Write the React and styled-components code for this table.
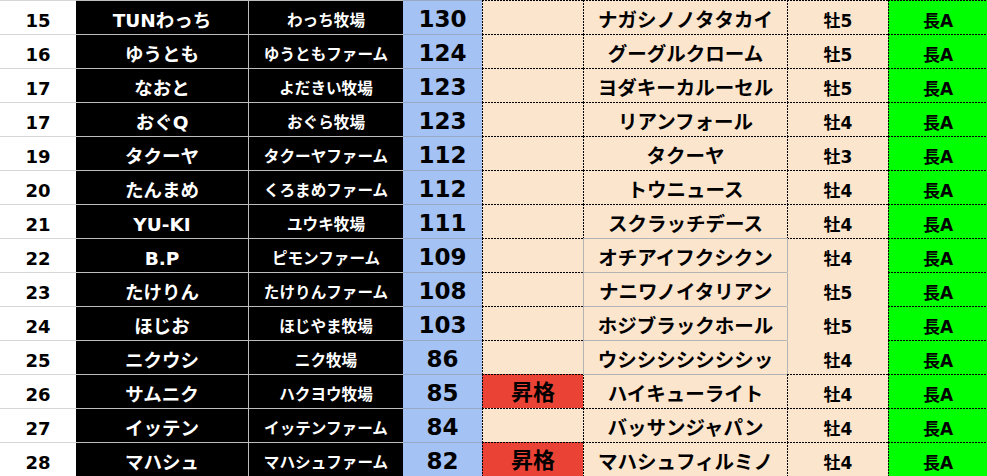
import React from "react";
import styled, { createGlobalStyle, css } from "styled-components";

const GlobalStyle = createGlobalStyle`
  html, body {
    margin: 0;
    padding: 0;
    background: #ffffff;
    overflow: hidden;
  }
  body {
    font-family: "DejaVu Sans", "Noto Sans CJK JP", sans-serif;
  }
`;

const COLS = "76px 172px 155px 79px 101px 204px 101px 99px";

const Sheet = styled.div`
  width: 987px;
  display: flex;
  flex-direction: column;
  font-family: "DejaVu Sans", "Noto Sans CJK JP", sans-serif;
  font-weight: 700;
`;

const Row = styled.div`
  display: grid;
  grid-template-columns: ${COLS};
  height: 34px;
`;

const Cell = styled.div`
  box-sizing: border-box;
  display: flex;
  justify-content: center;
  align-items: flex-end;
  padding-bottom: 4px;
  line-height: 1;
  white-space: nowrap;
  overflow: hidden;
  border-top: 1px solid transparent;
`;

const RankCell = styled(Cell)`
  background: #ffffff;
  color: #000000;
  border-top-color: #d6d6d6;
  font-size: 18px;
`;

const NameCell = styled(Cell)`
  background: #000000;
  color: #ffffff;
  border-top-color: #bdbdbd;
  font-size: 18.5px;
`;

const FarmCell = styled(Cell)`
  background: #000000;
  color: #ffffff;
  border-top-color: #bdbdbd;
  border-left: 1px solid #bdbdbd;
  font-size: 15.6px;
`;

const ScoreCell = styled(Cell)`
  background: #a4c2f4;
  color: #000000;
  border-top-color: #98a9c6;
  font-size: 23px;
  padding-bottom: 3px;
`;

const solidGray = "1px solid #b4b4b4";
const dashH = "repeating-linear-gradient(to right, #000 0 2px, transparent 2px 3px)";
const dashV = "repeating-linear-gradient(to bottom, #000 0 2px, transparent 2px 3px)";

/* spreadsheet dotted rule: 2px dash, 1px gap, drawn on the top and/or left edge */
const dashedEdges = ({ fill, top = true, left = true }) => css`
  background-color: ${fill};
  background-image: ${top ? dashH : "none"}, ${left ? dashV : "none"};
  background-size: 100% 1px, 1px 100%;
  background-position: left top, left top;
  background-repeat: no-repeat;
  background-origin: border-box;
  background-clip: border-box;
`;

const PeachCell = styled(Cell)`
  color: #000000;
  border-top: 1px solid transparent;
  border-left: 1px solid transparent;
`;

const PromoCell = styled(PeachCell)`
  ${(p) => dashedEdges({ fill: p.$promoted ? "#ea4335" : "#fce5cd" })}
  font-size: 22px;
`;

const HorseCell = styled(PeachCell)`
  ${(p) => dashedEdges({ fill: "#fce5cd", top: !p.$grayTop, left: !p.$grayLeft })}
  ${(p) => p.$grayTop && css`border-top: ${solidGray};`}
  ${(p) => p.$grayLeft && css`border-left: ${solidGray};`}
  font-size: 19.5px;
`;

const SexCell = styled(PeachCell)`
  ${(p) => dashedEdges({ fill: "#fce5cd", top: !p.$noTop, left: !p.$grayLeft })}
  ${(p) => p.$grayLeft && css`border-left: ${solidGray};`}
  font-size: 17px;
`;

const GradeCell = styled(PeachCell)`
  ${dashedEdges({ fill: "#00ff00" })}
  font-size: 17px;
`;

const rows = [
  ["15", "TUNわっち", "わっち牧場", "130", "", "ナガシノノタタカイ", "牡5"],
  ["16", "ゆうとも", "ゆうともファーム", "124", "", "グーグルクローム", "牡5"],
  ["17", "なおと", "よだきい牧場", "123", "", "ヨダキーカルーセル", "牡5"],
  ["17", "おぐQ", "おぐら牧場", "123", "", "リアンフォール", "牡4"],
  ["19", "タクーヤ", "タクーヤファーム", "112", "", "タクーヤ", "牡3"],
  ["20", "たんまめ", "くろまめファーム", "112", "", "トウニュース", "牡4"],
  ["21", "YU-KI", "ユウキ牧場", "111", "", "スクラッチデース", "牡4"],
  ["22", "B.P", "ピモンファーム", "109", "", "オチアイフクシクン", "牡4"],
  ["23", "たけりん", "たけりんファーム", "108", "", "ナニワノイタリアン", "牡5"],
  ["24", "ほじお", "ほじやま牧場", "103", "", "ホジブラックホール", "牡5"],
  ["25", "ニクウシ", "ニク牧場", "86", "", "ウシシシシシシシッ", "牡4"],
  ["26", "サムニク", "ハクヨウ牧場", "85", "昇格", "ハイキューライト", "牡4"],
  ["27", "イッテン", "イッテンファーム", "84", "", "バッサンジャパン", "牡4"],
  ["28", "マハシュ", "マハシュファーム", "82", "昇格", "マハシュフィルミノ", "牡4"],
];

// rows whose horse-name cell is framed by a solid gray box
const grayBox = new Set([7, 8, 9, 10]);

export default function App() {
  return (
    <>
      <GlobalStyle />
      <Sheet>
        {rows.map(([rank, name, farm, score, promo, horse, sex], i) => {
          const inBox = grayBox.has(i);
          return (
            <Row key={i}>
              <RankCell>{rank}</RankCell>
              <NameCell>{name}</NameCell>
              <FarmCell>{farm}</FarmCell>
              <ScoreCell>{score}</ScoreCell>
              <PromoCell $promoted={promo !== ""}>{promo}</PromoCell>
              <HorseCell $grayTop={inBox || i === 11} $grayLeft={inBox}>
                {horse}
              </HorseCell>
              <SexCell $grayLeft={inBox} $noTop={i >= 8 && i <= 10}>
                {sex}
              </SexCell>
              <GradeCell>長A</GradeCell>
            </Row>
          );
        })}
      </Sheet>
    </>
  );
}
